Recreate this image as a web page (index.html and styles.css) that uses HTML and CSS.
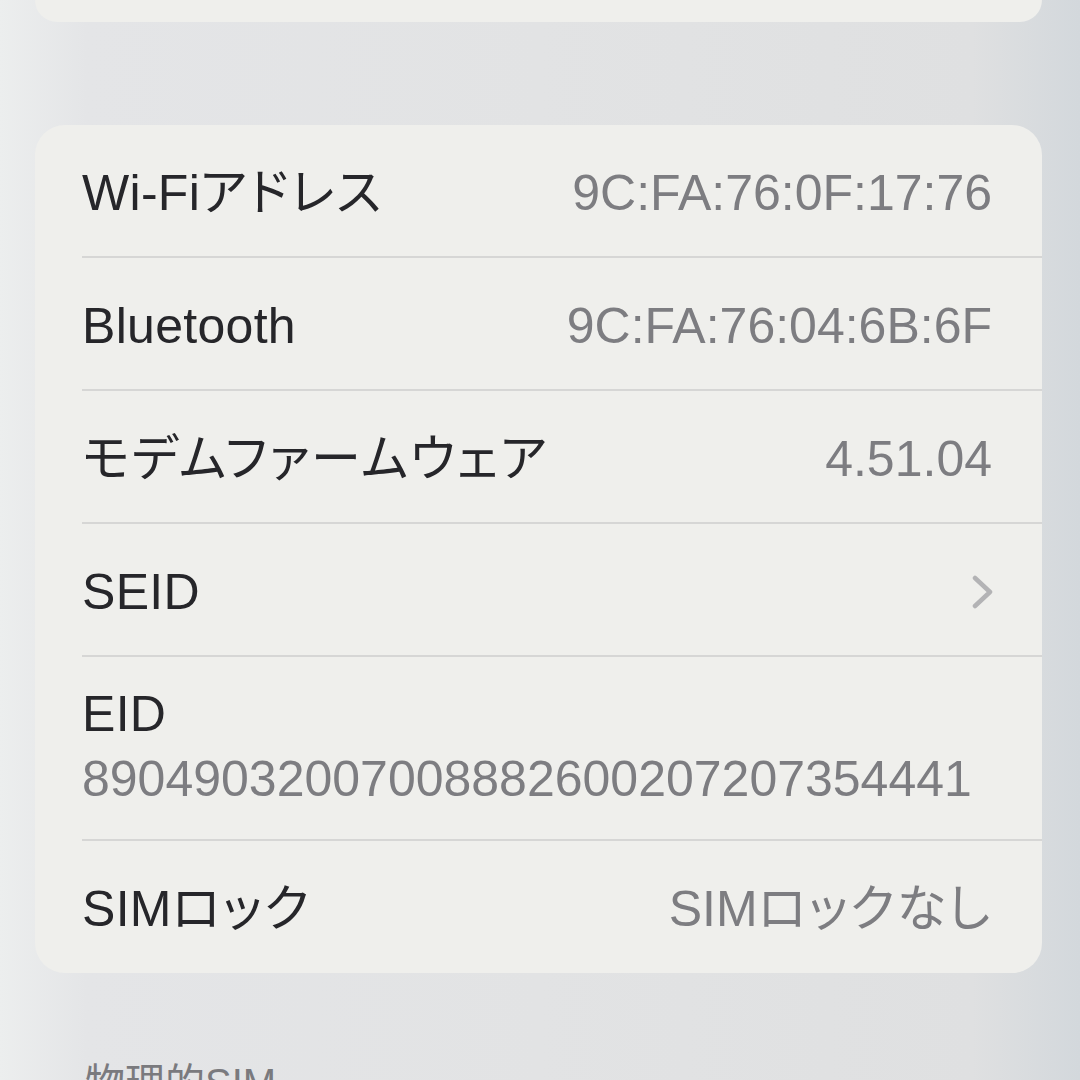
FILE: index.html
```html
<!DOCTYPE html>
<html lang="ja">
<head>
<meta charset="utf-8">
<link rel="stylesheet" href="styles.css">
</head>
<body>
<div class="screen">
  <div class="card card-top"></div>
  <div class="card card-main">
    <div class="row">
      <span class="label">Wi-Fi<span class="jp">アドレス</span></span>
      <span class="value">9C:FA:76:0F:17:76</span>
    </div>
    <div class="row">
      <span class="label">Bluetooth</span>
      <span class="value">9C:FA:76:04:6B:6F</span>
    </div>
    <div class="row">
      <span class="label jp">モデムファームウェア</span>
      <span class="value">4.51.04</span>
    </div>
    <div class="row">
      <span class="label">SEID</span>
      <svg class="chevron" width="24" height="34" viewBox="0 0 24 34"><path d="M4 3 L19 17 L4 31" fill="none" stroke="#b3b3b5" stroke-width="4.5" stroke-linecap="round" stroke-linejoin="round"/></svg>
    </div>
    <div class="row row-stack">
      <span class="label">EID</span>
      <span class="value value-block">89049032007008882600207207354441</span>
    </div>
    <div class="row row-last">
      <span class="label">SIM<span class="jp">ロック</span></span>
      <span class="value">SIM<span class="jp">ロックなし</span></span>
    </div>
  </div>
  <div class="section-header">物理的SIM</div>
</div>
</body>
</html>
```

FILE: styles.css
```css
html, body {
  margin: 0;
  padding: 0;
}
body {
  width: 1080px;
  height: 1080px;
  overflow: hidden;
  background: linear-gradient(90deg, #eceeee 0%, #e4e5e7 8%, #e2e3e4 50%, #dfe0e1 90%, #d3d8dc 100%);
  font-family: "Liberation Sans", "Noto Sans CJK JP", sans-serif;
}
.screen {
  display: flex;
  flex-direction: column;
}
.card {
  background: #efefec;
  margin: 0 38px 0 35px;
}
.card-top {
  height: 22px;
  border-radius: 0 0 30px 30px;
}
.card-main {
  margin-top: 103px;
  border-radius: 30px;
  padding-left: 47px;
}
.row {
  display: flex;
  align-items: center;
  justify-content: space-between;
  height: 127px;
  padding-top: 4px;
  padding-right: 50px;
  border-bottom: 2px solid #d6d6d5;
}
.row-stack {
  flex-direction: column;
  align-items: flex-start;
  justify-content: flex-start;
  height: auto;
  padding-top: 27px;
  padding-bottom: 30px;
}
.row-last {
  border-bottom: none;
  height: 128px;
}
.label {
  font-size: 50px;
  line-height: 60px;
  color: #26262a;
  letter-spacing: 0.3px;
  font-feature-settings: "palt";
}
.value {
  font-size: 50px;
  line-height: 60px;
  color: #7d7d81;
  font-feature-settings: "palt";
}
.jp {
  letter-spacing: 2px;
}
.value-block {
  margin-top: 5px;
}
.chevron {
  margin-right: -3px;
}
.section-header {
  margin: 86px 0 0 85px;
  font-size: 40px;
  line-height: 48px;
  color: #7a7a7e;
}
```
